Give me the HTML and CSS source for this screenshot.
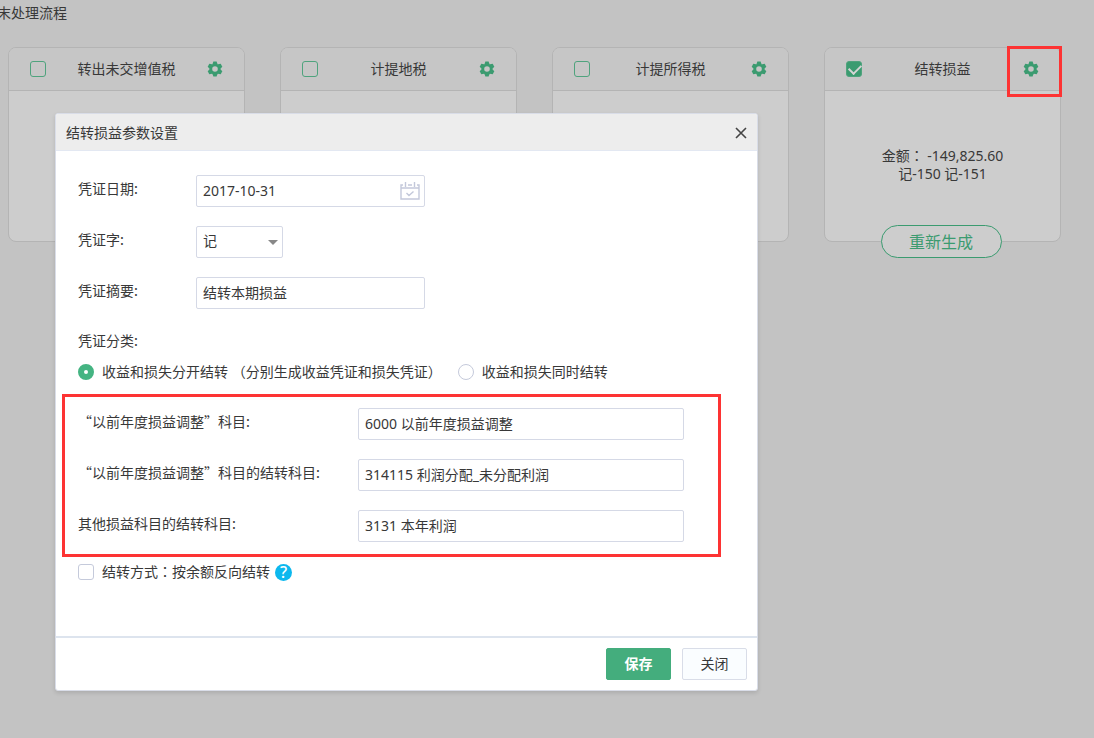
FILE: index.html
```html
<!DOCTYPE html>
<html lang="zh-CN">
<head>
<meta charset="utf-8">
<title>末处理流程</title>
<link rel="stylesheet" href="styles.css">
</head>
<body>
<svg class="symbols" aria-hidden="true">
  <symbol id="gear" viewBox="-8 -8 16 16">
    <circle r="4.2" fill="none" stroke="currentColor" stroke-width="2.800"/>
    <g fill="currentColor">
      <path id="tooth" d="M-2.600-4.800-1.600-7.500H1.600L2.600-4.800z"/>
      <use href="#tooth" transform="rotate(60)"/>
      <use href="#tooth" transform="rotate(120)"/>
      <use href="#tooth" transform="rotate(180)"/>
      <use href="#tooth" transform="rotate(240)"/>
      <use href="#tooth" transform="rotate(300)"/>
    </g>
  </symbol>
</svg>

<main class="page">
  <h1 class="page-title">末处理流程</h1>
  <div class="cards">
    <section class="card">
      <header class="card-head">
        <input class="check green" type="checkbox" aria-label="转出未交增值税">
        <h2 class="card-title">转出未交增值税</h2>
        <button class="gear" type="button" aria-label="设置"><svg><use href="#gear"/></svg></button>
      </header>
    </section>
    <section class="card">
      <header class="card-head">
        <input class="check green" type="checkbox" aria-label="计提地税">
        <h2 class="card-title">计提地税</h2>
        <button class="gear" type="button" aria-label="设置"><svg><use href="#gear"/></svg></button>
      </header>
    </section>
    <section class="card">
      <header class="card-head">
        <input class="check green" type="checkbox" aria-label="计提所得税">
        <h2 class="card-title">计提所得税</h2>
        <button class="gear" type="button" aria-label="设置"><svg><use href="#gear"/></svg></button>
      </header>
    </section>
    <section class="card">
      <header class="card-head">
        <input class="check green" type="checkbox" aria-label="结转损益" checked>
        <h2 class="card-title">结转损益</h2>
        <button class="gear marked" type="button" aria-label="设置"><svg><use href="#gear"/></svg></button>
      </header>
      <div class="card-body">
        <p>金额<span class="colon" lang="zh-TW">：</span> -149,825.60</p>
        <p>记-150 记-151</p>
      </div>
      <button class="regenerate" type="button">重新生成</button>
    </section>
  </div>
</main>

<div class="overlay">
  <form class="dialog" role="dialog" aria-labelledby="dialog-title">
    <header class="dialog-head">
      <h2 class="dialog-title" id="dialog-title">结转损益参数设置</h2>
      <button class="close" type="button" aria-label="关闭窗口">
        <svg viewBox="0 0 12 12"><path d="M1 1l10 10M11 1L1 11"/></svg>
      </button>
    </header>
    <div class="dialog-body">
      <div class="rows">
        <div class="row">
          <label class="label" for="date">凭证日期:</label>
          <div class="field">
            <input class="input" id="date" type="text" value="2017-10-31">
            <svg class="calendar" viewBox="0 0 20 18"><path d="M3 3H1v14h18V3h-2M1 6h18M8 3h4M5.500 0v5M14.500 0v5M6.500 11l2.500 2.500 4.500-4"/></svg>
          </div>
        </div>
        <div class="row">
          <label class="label" for="word">凭证字:</label>
          <div class="field short">
            <select class="input" id="word"><option>记</option></select>
            <svg class="arrow" viewBox="0 0 10 5"><path d="M0 0h10L5 5z"/></svg>
          </div>
        </div>
        <div class="row">
          <label class="label" for="summary">凭证摘要:</label>
          <div class="field"><input class="input" id="summary" type="text" value="结转本期损益"></div>
        </div>
      </div>

      <p class="group-label" id="kind">凭证分类:</p>
      <div class="options" role="radiogroup" aria-labelledby="kind">
        <label class="option"><input class="radio" type="radio" name="kind" checked>收益和损失分开结转 （分别生成收益凭证和损失凭证）</label>
        <label class="option"><input class="radio" type="radio" name="kind">收益和损失同时结转</label>
      </div>

      <div class="rows accounts">
        <div class="row">
          <label class="label" for="prior">“以前年度损益调整”科目:</label>
          <div class="field"><input class="input" id="prior" type="text" value="6000 以前年度损益调整"></div>
        </div>
        <div class="row">
          <label class="label" for="prior-to">“以前年度损益调整”科目的结转科目:</label>
          <div class="field"><input class="input" id="prior-to" type="text" value="314115 利润分配_未分配利润"></div>
        </div>
        <div class="row">
          <label class="label" for="other-to">其他损益科目的结转科目:</label>
          <div class="field"><input class="input" id="other-to" type="text" value="3131 本年利润"></div>
        </div>
      </div>

      <div class="method">
        <label class="option"><input class="check" type="checkbox"><span>结转方式<span class="colon" lang="zh-TW">：</span>按余额反向结转</span></label>
        <button class="help" type="button" aria-label="帮助">?</button>
      </div>
    </div>
    <footer class="dialog-foot">
      <button class="btn primary" type="button">保存</button>
      <button class="btn" type="button">关闭</button>
    </footer>
  </form>
</div>
</body>
</html>
```
FILE: styles.css
```css
* {
  box-sizing: border-box;
}

body {
  margin: 0;
  min-height: 100vh;
  overflow: hidden;
  background: #c3c3c3;
  color: #383838;
  font: 14px/20px "Noto Sans", "Noto Sans CJK SC", sans-serif;
}

h1,
h2,
p {
  margin: 0;
  font-size: 14px;
  font-weight: 400;
}

button,
input,
select {
  margin: 0;
  font: inherit;
  color: inherit;
}

button {
  padding: 0;
  border: 0;
  background: none;
  cursor: pointer;
}

.symbols {
  position: absolute;
  width: 0;
  height: 0;
}

.colon {
  font-family: "Noto Sans CJK TC", sans-serif;
  line-height: 1;
}

/* Process cards */
.page {
  padding: 3px 33px 0 8px;
}

.page-title {
  margin-left: -11px;
}

.cards {
  display: grid;
  grid-template-columns: repeat(4, 1fr);
  gap: 35px;
  margin-top: 24px;
}

.card {
  position: relative;
  min-height: 195px;
  border: 1px solid #b4b4b4;
  border-radius: 8px;
  background: #cdcdcd;
}

.card-head {
  display: flex;
  align-items: center;
  height: 43px;
  padding: 0 21px;
  border-bottom: 1px solid #b4b4b4;
  border-radius: 7px 7px 0 0;
  background: #c6c6c6;
}

.card-title {
  flex: 1;
  text-align: center;
}

.gear {
  position: relative;
  width: 16px;
  height: 16px;
  color: #3b9b70;
}

.gear svg {
  display: block;
  width: 16px;
  height: 16px;
}

.marked::after {
  content: "";
  position: absolute;
  inset: -15px -23px -20px -16px;
  border: 3px solid #fd3333;
}

.card-body {
  padding-top: 56px;
  line-height: 18px;
  text-align: center;
}

.regenerate {
  position: absolute;
  left: 50%;
  bottom: -17px;
  width: 121px;
  height: 33px;
  margin-left: -62px;
  border: 1px solid #3b9b70;
  border-radius: 17px;
  background: #cdcdcd;
  color: #3b9b70;
  font-size: 16px;
}

/* Tick boxes and radios */
.check,
.radio {
  flex: none;
  appearance: none;
  width: 16px;
  height: 16px;
  border: 1px solid #c5cadb;
  border-radius: 3px;
  background: #fff;
}

.green {
  border-color: #4fa37d;
  background: transparent;
}

.green:checked {
  position: relative;
  background: #3b9b70;
}

.green:checked::after {
  content: "";
  position: absolute;
  left: 2px;
  top: 2px;
  width: 10px;
  height: 6px;
  border: solid #d5d5d5;
  border-width: 0 0 2px 2px;
  transform: rotate(-45deg);
}

.radio {
  border-radius: 50%;
}

.radio:checked {
  border: 6px solid #44b482;
}

/* Dialog */
.overlay {
  position: absolute;
  inset: 0;
  padding: 113px 16px 0 55px;
}

.dialog {
  max-width: 703px;
  border: 1px solid #d9dde8;
  border-radius: 3px;
  background: #fff;
  box-shadow: 0 2px 4px rgba(0, 0, 0, 0.12);
}

.dialog-head {
  display: flex;
  align-items: center;
  justify-content: space-between;
  height: 37px;
  padding: 2px 10px 0;
  border-bottom: 1px solid #e3e8f2;
  border-radius: 2px 2px 0 0;
  background: #ededed;
}

.close {
  width: 12px;
  height: 12px;
}

.close svg {
  display: block;
  fill: none;
  stroke: #444;
  stroke-width: 1.6;
}

.dialog-body {
  padding: 24px 22px 54px;
}

.rows {
  display: grid;
  gap: 19px;
}

.row {
  display: grid;
  grid-template-columns: 118px 229px;
}

.label {
  padding-top: 3px;
  font-family: "Noto Sans CJK SC", sans-serif;
}

.field {
  position: relative;
}

.short {
  width: 87px;
}

.input {
  display: block;
  appearance: none;
  width: 100%;
  height: 32px;
  padding: 0 6px 2px;
  border: 1px solid #d5d9e6;
  border-radius: 2px;
  background: #fff;
  outline: 0;
}

.calendar {
  position: absolute;
  right: 5px;
  top: 7px;
  width: 20px;
  height: 18px;
  fill: none;
  stroke: #c3c8da;
  stroke-width: 1.4;
}

.arrow {
  position: absolute;
  right: 5px;
  top: 14px;
  width: 10px;
  height: 5px;
  fill: #888;
  pointer-events: none;
}

.group-label {
  margin-top: 21px;
  font-family: "Noto Sans CJK SC", sans-serif;
}

.options {
  display: flex;
  gap: 16px;
  margin-top: 12px;
}

.option {
  display: flex;
  align-items: center;
  gap: 8px;
}

.accounts {
  position: relative;
  margin-top: 26px;
}

.accounts::after {
  content: "";
  position: absolute;
  inset: -14px 14px -15px -16px;
  border: 3px solid #fd3333;
  pointer-events: none;
}

.accounts .row {
  grid-template-columns: 280px 326px;
}

.method {
  display: flex;
  align-items: center;
  gap: 5px;
  margin-top: 20px;
}

.help {
  width: 17px;
  height: 17px;
  border-radius: 50%;
  background: #0cb8ee;
  color: #fff;
  font-size: 16px;
  font-weight: 500;
  line-height: 17px;
}

.dialog-foot {
  display: flex;
  justify-content: flex-end;
  gap: 11px;
  padding: 10px;
  border-top: 2px solid #dde4ee;
}

.btn {
  width: 65px;
  height: 32px;
  border: 1px solid #d9dde8;
  border-radius: 2px;
  background: #fafdff;
}

.primary {
  border-color: #44ad7d;
  background: #44ad7d;
  color: #fff;
  font-weight: 700;
}
```
